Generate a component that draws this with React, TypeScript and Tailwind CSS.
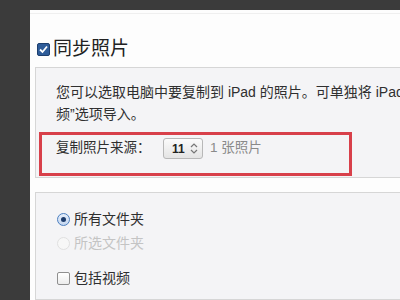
export default function App() {
  const font = { fontFamily: '"Liberation Sans", "Noto Sans CJK SC", sans-serif' };
  return (
    <div className="w-[400px] h-[300px] overflow-hidden bg-[#3b3b3b] pl-[30px] pt-[10px]" style={font}>
      <div className="h-full w-[400px] bg-[#fdfdfd] flex flex-col">
        <div className="h-[4px] border-b border-[#efefef]" />
        <div className="flex items-center mt-[24px] ml-[7px] h-[22px]">
          <div className="w-[13px] h-[13px] rounded-[2px] bg-[#2e5c99] border border-[#1d3f6e] flex items-center justify-center">
            <svg width="11" height="11" viewBox="0 0 11 11">
              <path d="M2 5.5 L4.5 8 L9 2.5" stroke="#ffffff" strokeWidth="1.8" fill="none" />
            </svg>
          </div>
          <span className="ml-[3px] text-[19px] leading-[22px] text-[#222222]">同步照片</span>
        </div>
        <div className="mt-[7px] ml-[5px] w-[400px] bg-[#f4f4f6] border border-[#d6d6d6] pt-[13px] pb-[1px]">
          <div className="pl-[20px] text-[14px] leading-[22px] text-[#2f2f2f] whitespace-nowrap">
            <div>您可以选取电脑中要复制到 iPad 的照片。可单独将 iPad 照片</div>
            <div>频”选项导入。</div>
          </div>
          <div className="mt-[7px] ml-[3px] w-[313px] h-[44px] border-[3px] border-[#d8404a]">
            <div className="flex items-center h-[21px] mt-[3px] pl-[14px]">
              <span className="w-[107px] text-[13.5px] text-[#2f2f2f] whitespace-nowrap">复制照片来源：</span>
              <div className="w-[40px] h-[21px] rounded-[3px] border border-[#b8b8b8] bg-gradient-to-b from-[#fbfbfb] to-[#e4e4e4] flex items-center pl-[8px]">
                <span className="text-[12px] font-bold text-[#222222] w-[18px]">11</span>
                <svg width="8" height="11" viewBox="0 0 8 11">
                  <path d="M1 4 L4 1 L7 4 M1 7 L4 10 L7 7" stroke="#777777" strokeWidth="1.2" fill="none" />
                </svg>
              </div>
              <span className="ml-[7px] text-[13.5px] text-[#8a8a8a] whitespace-nowrap">1 张照片</span>
            </div>
          </div>
        </div>
        <div className="mt-[14px] ml-[5px] w-[400px] flex-1 bg-[#f4f4f6] border border-[#d6d6d6] pt-[14px] pl-[21px]">
          <div className="flex items-center h-[24px]">
            <div className="w-[13px] h-[13px] rounded-full border border-[#4b7fc0] bg-gradient-to-b from-[#e6eefa] to-[#c4d6ef] flex items-center justify-center">
              <div className="w-[5px] h-[5px] rounded-full bg-[#1d3c6c]" />
            </div>
            <span className="ml-[4px] text-[14px] text-[#2f2f2f]">所有文件夹</span>
          </div>
          <div className="flex items-center h-[24px]">
            <div className="w-[13px] h-[13px] rounded-full border border-[#e0e0e0] bg-[#f7f7f7]" />
            <span className="ml-[4px] text-[14px] text-[#c4c4c4]">所选文件夹</span>
          </div>
          <div className="flex items-center h-[24px] mt-[11px]">
            <div className="w-[13px] h-[13px] rounded-[2px] border border-[#8f8f8f] bg-gradient-to-b from-[#ffffff] to-[#ececec]" />
            <span className="ml-[4px] text-[14px] text-[#2f2f2f]">包括视频</span>
          </div>
        </div>
      </div>
    </div>
  );
}
